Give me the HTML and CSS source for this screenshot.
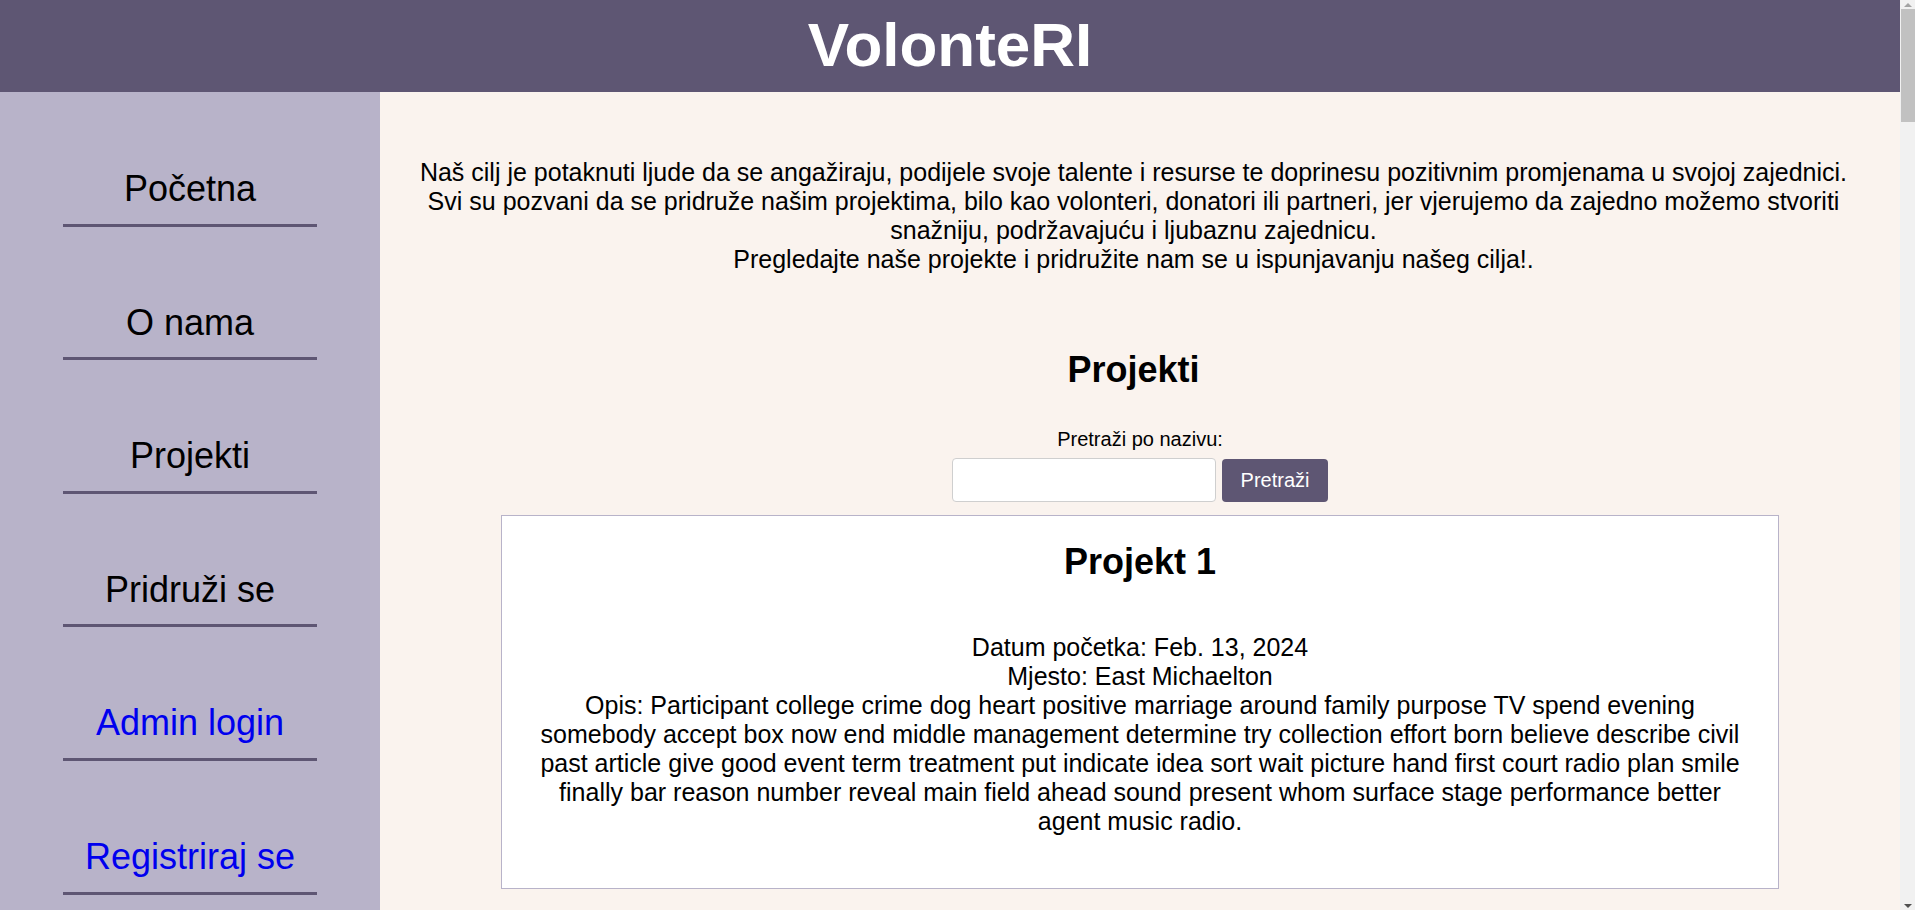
FILE: index.html
```html
<!DOCTYPE html>
<html lang="hr">
<head>
<meta charset="utf-8">
<title>VolonteRI</title>
<link rel="stylesheet" href="styles.css">
</head>
<body>
<header class="site-header">
  <h1 class="site-title">VolonteRI</h1>
</header>
<div class="layout">
  <aside class="sidebar">
    <ul class="nav">
      <li class="nav-item"><a class="nav-link" href="#">Početna</a></li>
      <li class="nav-item"><a class="nav-link" href="#">O nama</a></li>
      <li class="nav-item"><a class="nav-link" href="#">Projekti</a></li>
      <li class="nav-item"><a class="nav-link" href="#">Pridruži se</a></li>
      <li class="nav-item"><a class="nav-link nav-link-auth" href="#">Admin login</a></li>
      <li class="nav-item"><a class="nav-link nav-link-auth" href="#">Registriraj se</a></li>
    </ul>
  </aside>
  <main class="main">
    <p class="intro">Naš cilj je potaknuti ljude da se angažiraju, podijele svoje talente i resurse te doprinesu pozitivnim promjenama u svojoj zajednici.<br>Svi su pozvani da se pridruže našim projektima, bilo kao volonteri, donatori ili partneri, jer vjerujemo da zajedno možemo stvoriti snažniju, podržavajuću i ljubaznu zajednicu.<br>Pregledajte naše projekte i pridružite nam se u ispunjavanju našeg cilja!.</p>
    <h2 class="section-title">Projekti</h2>
    <form class="search">
      <label class="search-label" for="q">Pretraži po nazivu:</label>
      <div class="search-row">
        <input class="search-input" id="q" type="text">
        <button class="search-btn" type="button">Pretraži</button>
      </div>
    </form>
    <article class="card">
      <h2 class="card-title">Projekt 1</h2>
      <p class="card-info">Datum početka: Feb. 13, 2024<br>Mjesto: East Michaelton<br>Opis: Participant college crime dog heart positive marriage around family purpose TV spend evening somebody accept box now end middle management determine try collection effort born believe describe civil past article give good event term treatment put indicate idea sort wait picture hand first court radio plan smile finally bar reason number reveal main field ahead sound present whom surface stage performance better agent music radio.</p>
    </article>
  </main>
</div>
<div class="scrollbar" aria-hidden="true">
  <div class="scroll-btn"><span class="arrow-up"></span></div>
  <div class="scroll-thumb"></div>
  <div class="scroll-track"></div>
  <div class="scroll-btn"><span class="arrow-down"></span></div>
</div>
</body>
</html>
```

FILE: styles.css
```css
html, body {
  overflow: hidden;
}

body {
  margin: 0 15px 0 0;
  font-family: "Liberation Sans", Arial, sans-serif;
  background: #faf3ee;
  color: #000;
}

.site-header {
  box-sizing: border-box;
  height: 92px;
  padding-top: 9px;
  background: #5e5673;
  color: #fff;
  text-align: center;
}

.site-title {
  margin: 0;
  font-size: 62px;
  font-weight: bold;
  line-height: normal;
}

.layout {
  display: grid;
  grid-template-columns: 380px 1fr;
  min-height: calc(100vh - 92px);
}

.sidebar {
  background: #b8b3c9;
  padding-top: 1px;
}

.nav {
  list-style: none;
  margin: 0;
  padding: 0;
}

.nav-item {
  width: 254px;
  margin: 0 auto;
  padding: 75px 0 14px;
  border-bottom: 3px solid #5e5673;
  text-align: center;
  font-size: 36px;
  line-height: 41.6px;
}

.nav-link {
  color: #000;
  text-decoration: none;
}

.nav-link-auth {
  color: #0000ee;
}

.main {
  padding: 66px 0 40px;
  text-align: center;
}

.intro {
  margin: 0;
  padding-right: 13px;
  font-size: 25px;
}

.section-title {
  margin: 75px 0 0;
  padding-right: 13px;
  font-size: 36px;
  font-weight: bold;
}

.search {
  display: flex;
  flex-direction: column;
  align-items: center;
  margin: 37px 0 0;
}

.search-label {
  display: block;
  font-size: 20px;
  line-height: 23px;
  margin-bottom: 7px;
}

.search-row {
  display: flex;
  align-items: center;
  gap: 6px;
}

.search-input {
  box-sizing: border-box;
  width: 264px;
  height: 44px;
  padding: 0 8px;
  border: 1px solid #cfcfcf;
  border-radius: 4px;
  background: #fff;
  font-size: 20px;
  font-family: inherit;
}

.search-btn {
  box-sizing: border-box;
  height: 43px;
  padding: 0 19px;
  border: none;
  border-radius: 4px;
  background: #5e5673;
  color: #fff;
  font-size: 20px;
  font-family: inherit;
}

.card {
  width: 80%;
  margin: 13px auto 0;
  padding: 25px 30px 52px;
  background: #fff;
  border: 1px solid #b8b3c9;
}

.card-title {
  margin: 0;
  font-size: 36px;
  font-weight: bold;
}

.card-info {
  margin: 50px 0 0;
  font-size: 25px;
}

/* decorative classic scrollbar drawn over the right edge */
.scrollbar {
  position: fixed;
  top: 0;
  right: 0;
  width: 15px;
  height: 100vh;
  display: flex;
  flex-direction: column;
  background: #f1f1f1;
}

.scroll-btn {
  height: 9px;
  display: flex;
  align-items: center;
  justify-content: center;
}

.arrow-up {
  width: 0;
  height: 0;
  border-left: 4px solid transparent;
  border-right: 4px solid transparent;
  border-bottom: 4px solid #a3a3a3;
}

.arrow-down {
  width: 0;
  height: 0;
  border-left: 4px solid transparent;
  border-right: 4px solid transparent;
  border-top: 4px solid #505050;
}

.scroll-thumb {
  height: 113px;
  margin-left: 1px;
  background: #c1c1c1;
}

.scroll-track {
  flex: 1;
}
```
